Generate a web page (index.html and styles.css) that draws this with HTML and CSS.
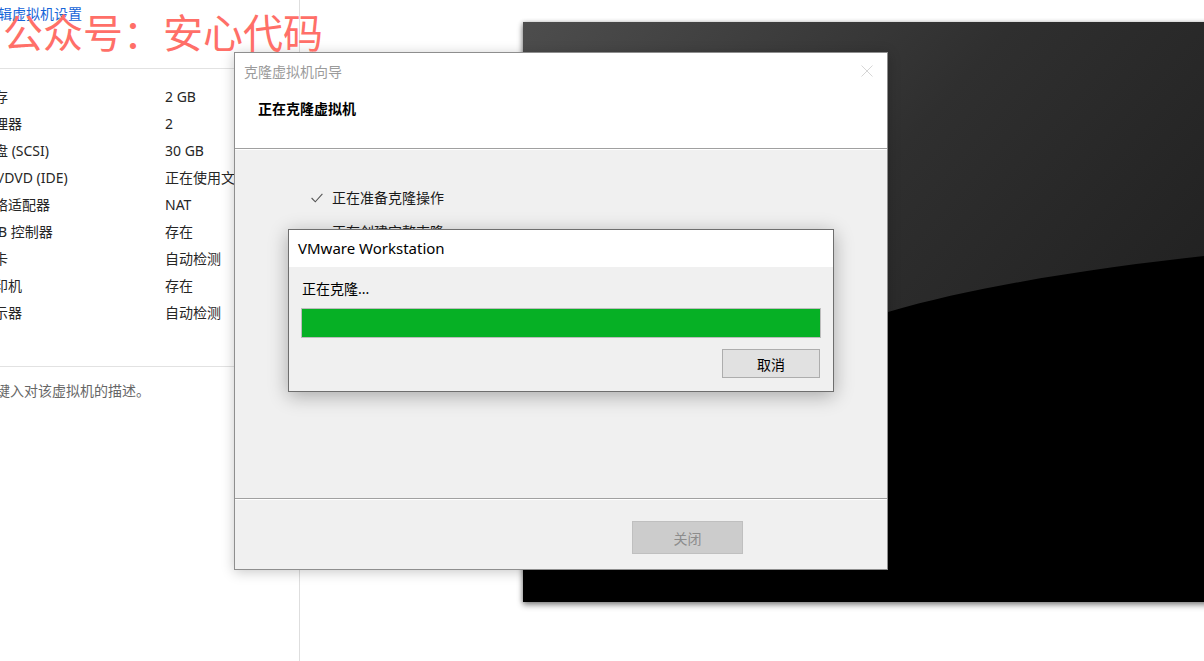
FILE: index.html
```html
<!DOCTYPE html>
<html lang="zh-CN">
<head>
<meta charset="utf-8">
<title>克隆虚拟机</title>
<link rel="stylesheet" href="styles.css">
</head>
<body>
<div class="desktop">
  <aside class="sidebar">
    <div class="sb-head"><a class="edit-link">编辑虚拟机设置</a></div>
    <div class="devices">
      <div class="dev"><span>内存</span><span>2 GB</span></div>
      <div class="dev"><span>处理器</span><span>2</span></div>
      <div class="dev"><span>硬盘 (SCSI)</span><span>30 GB</span></div>
      <div class="dev"><span>CD/DVD (IDE)</span><span>正在使用文件</span></div>
      <div class="dev"><span>网络适配器</span><span>NAT</span></div>
      <div class="dev"><span>USB 控制器</span><span>存在</span></div>
      <div class="dev"><span>声卡</span><span>自动检测</span></div>
      <div class="dev"><span>打印机</span><span>存在</span></div>
      <div class="dev"><span>显示器</span><span>自动检测</span></div>
    </div>
    <div class="desc"><span class="desc-text">在此处键入对该虚拟机的描述。</span></div>
  </aside>

  <section class="stage">
    <div class="screen">
      <svg class="screen-art" viewBox="0 0 700 580" preserveAspectRatio="none" width="700" height="580">
        <defs>
          <linearGradient id="gl" x1="0" y1="0" x2="1" y2="0.75">
            <stop offset="0" stop-color="#4d4d4d"/>
            <stop offset="0.45" stop-color="#2f2f2f"/>
            <stop offset="1" stop-color="#1c1c1c"/>
          </linearGradient>
        </defs>
        <rect x="0" y="0" width="700" height="580" fill="url(#gl)"/>
        <path d="M0 430 C150 360 280 310 365 290 C465 260.5 600 242.5 700 232 L700 580 L0 580 Z" fill="#000"/>
      </svg>
    </div>
  </section>

  <div class="watermark">公众号：安心代码</div>

  <div class="wizard">
    <div class="wz-header">
      <div class="wz-title">克隆虚拟机向导</div>
      <svg class="wz-close" viewBox="0 0 12 12" width="12" height="12"><path d="M0.5 0.5 L11.5 11.5 M11.5 0.5 L0.5 11.5" stroke="#d6d6d6" stroke-width="1" fill="none"/></svg>
      <div class="wz-heading">正在克隆虚拟机</div>
    </div>
    <div class="wz-sep"></div>
    <div class="wz-body">
      <div class="step"><svg class="check" viewBox="0 0 12 10" width="12" height="10"><path d="M0.6 5 L4.3 8.8 L11.4 0.8" stroke="#555" stroke-width="1.1" fill="none"/></svg><span>正在准备克隆操作</span></div>
      <div class="step"><span class="check-space"></span><span>正在创建完整克隆</span></div>
    </div>
    <div class="wz-sep"></div>
    <div class="wz-footer">
      <button class="btn btn-disabled">关闭</button>
    </div>
  </div>

  <div class="progress-dlg">
    <div class="pd-title">VMware Workstation</div>
    <div class="pd-body">
      <div class="pd-msg">正在克隆...</div>
      <div class="pd-bar"></div>
      <div class="pd-actions"><button class="btn btn-cancel">取消</button></div>
    </div>
  </div>
</div>
</body>
</html>
```

FILE: styles.css
```css
* { box-sizing: border-box; }
html, body { margin: 0; padding: 0; }
body {
  width: 1204px;
  height: 661px;
  overflow: hidden;
  background: #fff;
  font-family: "Noto Sans", "Noto Sans CJK SC", sans-serif;
  font-size: 14px;
  color: #222;
}
.desktop {
  position: relative;
  width: 1204px;
  height: 661px;
  display: flex;
  overflow: hidden;
}

/* sidebar */
.sidebar {
  width: 300px;
  height: 661px;
  flex-shrink: 0;
  border-right: 1px solid #dedede;
  overflow: hidden;
  display: flex;
  flex-direction: column;
}
.sb-head {
  height: 69px;
  border-bottom: 1px solid #e2e2e2;
  padding-top: 4px;
}
.edit-link {
  display: block;
  margin-left: -16px;
  line-height: 20px;
  color: #1565d8;
  white-space: nowrap;
}
.devices {
  padding-top: 14px;
  margin-bottom: 40px;
}
.dev {
  display: grid;
  grid-template-columns: 185px 1fr;
  margin-left: -20px;
  height: 27px;
  line-height: 27px;
  white-space: nowrap;
  color: #262626;
}
.desc {
  border-top: 1px solid #e2e2e2;
  padding-top: 14px;
}
.desc-text {
  display: block;
  margin-left: -46px;
  line-height: 20px;
  color: #666;
  white-space: nowrap;
}

/* stage / VM screen */
.stage {
  flex: 1;
  padding: 22px 0 0 223px;
  overflow: hidden;
}
.screen {
  width: 700px;
  height: 580px;
  box-shadow: 0 3px 6px rgba(0,0,0,0.45), -1px 0 4px rgba(0,0,0,0.2);
}
.screen-art { display: block; }

/* watermark */
.watermark {
  position: absolute;
  left: 3px;
  top: 11px;
  font-family: "Noto Sans CJK SC", sans-serif;
  font-size: 40px;
  line-height: 40px;
  color: #ff6f68;
  white-space: nowrap;
  pointer-events: none;
  z-index: 5;
}

/* wizard dialog */
.wizard {
  position: absolute;
  left: 234px;
  top: 52px;
  width: 654px;
  height: 518px;
  border: 1px solid #8e8e8e;
  background: #f0f0f0;
  display: flex;
  flex-direction: column;
  box-shadow: 0 2px 12px rgba(0,0,0,0.22);
  z-index: 2;
}
.wz-header {
  position: relative;
  height: 95px;
  background: #fff;
}
.wz-title {
  height: 40px;
  line-height: 38px;
  padding-left: 9px;
  color: #9b9b9b;
}
.wz-close {
  position: absolute;
  right: 14px;
  top: 12px;
}
.wz-heading {
  height: 34px;
  line-height: 32px;
  padding-left: 23px;
  font-weight: 700;
  color: #000;
}
.wz-sep {
  height: 2px;
  background: #a0a0a0;
  border-bottom: 1px solid #fff;
}
.wz-body {
  height: 348px;
  padding: 31px 0 0 76px;
}
.step {
  display: flex;
  align-items: center;
  height: 34px;
  line-height: 34px;
  color: #1a1a1a;
}
.check { margin-right: 9px; }
.check-space { width: 21px; }
.wz-footer {
  height: 69px;
  display: flex;
  justify-content: flex-end;
  align-items: flex-start;
  padding: 21px 144px 0 0;
}
.btn {
  font-family: "Noto Sans", "Noto Sans CJK SC", sans-serif;
  font-size: 14px;
  padding: 0;
  margin: 0;
}
.btn-disabled {
  width: 111px;
  height: 33px;
  background: #cccccc;
  border: 1px solid #bfbfbf;
  color: #8c8c8c;
}

/* progress dialog */
.progress-dlg {
  position: absolute;
  left: 288px;
  top: 229px;
  width: 546px;
  height: 163px;
  border: 1px solid #6e6e6e;
  background: #f0f0f0;
  box-shadow: 0 4px 18px rgba(0,0,0,0.3);
  z-index: 3;
}
.pd-title {
  height: 37px;
  line-height: 37px;
  padding-left: 9px;
  background: #fff;
  font-size: 15px;
  color: #000;
}
.pd-body {
  padding: 12px 12px 13px 12px;
}
.pd-msg {
  line-height: 20px;
  padding-left: 1px;
  color: #000;
}
.pd-bar {
  margin-top: 9px;
  height: 30px;
  border: 1px solid #bcbcbc;
  background: #06b025;
}
.pd-actions {
  margin-top: 11px;
  display: flex;
  justify-content: flex-end;
  padding-right: 1px;
}
.btn-cancel {
  width: 98px;
  height: 29px;
  background: #e1e1e1;
  border: 1px solid #adadad;
  color: #000;
}
```
